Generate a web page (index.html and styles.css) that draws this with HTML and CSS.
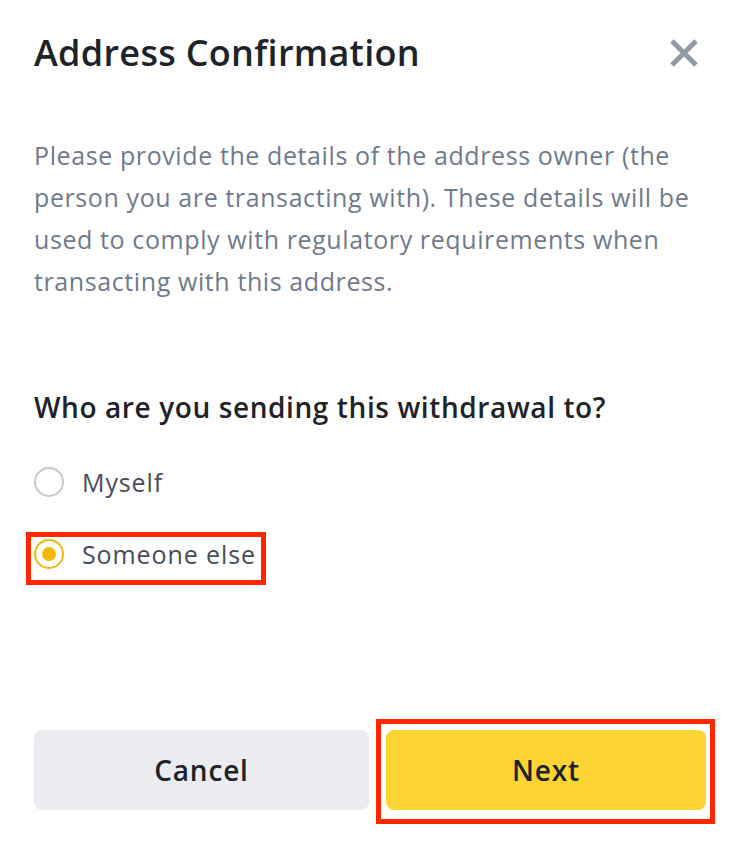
FILE: index.html
```html
<!DOCTYPE html>
<html lang="en">
<head>
<meta charset="utf-8">
<title>Address Confirmation</title>
<link rel="stylesheet" href="styles.css">
</head>
<body>
<div class="modal">
  <div class="header">
    <h1 class="title">Address Confirmation</h1>
    <button class="close" aria-label="Close">
      <svg width="30" height="30" viewBox="0 0 30 30"><path d="M3 3 L27 27 M27 3 L3 27" stroke="#929aa5" stroke-width="5" stroke-linecap="butt" fill="none"/></svg>
    </button>
  </div>
  <p class="desc">Please provide the details of the address owner (the person you are transacting with). These details will be used to comply with regulatory requirements when transacting with this address.</p>
  <h2 class="question">Who are you sending this withdrawal to?</h2>
  <div class="options">
    <label class="option">
      <span class="radio"></span>
      <span class="label">Myself</span>
    </label>
    <label class="option option-selected">
      <span class="radio radio-on"></span>
      <span class="label">Someone else</span>
      <span class="mark mark-option"></span>
    </label>
  </div>
  <div class="actions">
    <button class="btn btn-cancel">Cancel</button>
    <button class="btn btn-next">Next<span class="mark mark-next"></span></button>
  </div>
</div>
</body>
</html>
```
FILE: styles.css
```css
* { box-sizing: border-box; }
html, body { margin: 0; padding: 0; background: #ffffff; }
body { font-family: "Open Sans", "Liberation Sans", sans-serif; }

.modal {
  width: 750px;
  height: 852px;
  padding: 33px 44px 0 34px;
  display: flex;
  flex-direction: column;
}

.header {
  display: flex;
  justify-content: space-between;
  align-items: center;
  height: 40px;
}
.title {
  margin: 0;
  font-size: 36px;
  line-height: 40px;
  font-weight: 600;
  letter-spacing: 0.3px;
  color: #1e2329;
}
.close {
  border: 0;
  background: none;
  padding: 0;
  margin-right: 7px;
  width: 30px;
  height: 30px;
  display: flex;
}

.desc {
  margin: 61px 0 0;
  font-size: 25px;
  line-height: 42px;
  letter-spacing: 0.6px;
  color: #707a8a;
  width: 672px;
}

.question {
  margin: 87px 0 0;
  font-size: 28px;
  line-height: 36px;
  font-weight: 600;
  letter-spacing: 0.6px;
  color: #1e2329;
}

.options {
  margin-top: 42px;
  display: flex;
  flex-direction: column;
  gap: 42px;
}
.option {
  position: relative;
  display: flex;
  align-items: center;
  gap: 18px;
  height: 30px;
  width: max-content;
}
.radio {
  width: 30px;
  height: 30px;
  border-radius: 50%;
  border: 2px solid #c3c8cf;
  display: flex;
  align-items: center;
  justify-content: center;
}
.radio-on { border-color: #f0b90b; }
.radio-on::after {
  content: "";
  width: 14px;
  height: 14px;
  border-radius: 50%;
  background: #f0b90b;
}
.label {
  font-size: 25px;
  letter-spacing: 0.9px;
  color: #474d57;
  line-height: 30px;
}

.mark {
  position: absolute;
  border: 5px solid #ff2600;
  pointer-events: none;
}
.mark-option {
  left: -8px;
  top: -7px;
  width: 240px;
  height: 53px;
}

.actions {
  margin-top: 161px;
  display: grid;
  grid-template-columns: 335px 320px;
  column-gap: 17px;
}
.btn {
  position: relative;
  height: 80px;
  border: 0;
  border-radius: 8px;
  font-family: inherit;
  font-size: 28px;
  font-weight: 600;
  letter-spacing: 0.8px;
  color: #1e2329;
}
.btn-cancel { background: #eaecef; }
.btn-next { background: #fcd535; }
.mark-next {
  left: -10px;
  top: -11px;
  right: -9px;
  bottom: -14px;
}
```
